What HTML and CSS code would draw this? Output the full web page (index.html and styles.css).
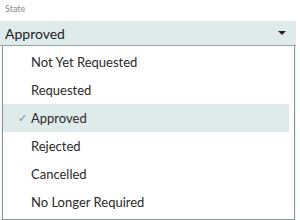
FILE: index.html
```html
<!DOCTYPE html>
<html lang="en">
<head>
    <meta charset="UTF-8">
    <title>State</title>
    <link rel="stylesheet" href="styles.css">
</head>
<body>
    <div class="field">
        <div class="field-label">State</div>
        <div class="select">
            <span class="select-value">Approved</span>
            <span class="caret"></span>
        </div>
        <ul class="menu">
            <li class="option">Not Yet Requested</li>
            <li class="option">Requested</li>
            <li class="option selected"><span class="tick">&#10003;</span>Approved</li>
            <li class="option">Rejected</li>
            <li class="option">Cancelled</li>
            <li class="option">No Longer Required</li>
        </ul>
    </div>
</body>
</html>
```

FILE: styles.css
```css
body {
    margin: 0;
    font-family: Lato, "Open Sans", sans-serif;
    background: #fff;
    color: #222;
}
.field {
    width: 296px;
    padding-top: 3px;
}
.field-label {
    font-size: 9px;
    color: #8a8a8a;
    padding-left: 5px;
    height: 18px;
    line-height: 12px;
}
.select {
    display: flex;
    align-items: center;
    justify-content: space-between;
    height: 24px;
    padding: 0 10px 0 5px;
    background-color: #dfeaea;
    border-bottom: 1px solid #8fa8a2;
}
.select-value {
    font-size: 14px;
    color: #1e1e1e;
}
.caret {
    width: 0;
    height: 0;
    border-left: 4px solid transparent;
    border-right: 4px solid transparent;
    border-top: 4px solid #222;
}
.menu {
    list-style: none;
    margin: 0 1px 0 2px;
    padding: 2px 5px 3px 0;
    background: #fff;
    border: 1px solid #7f9a94;
    border-top: none;
    box-shadow: 0 1px 2px rgba(0, 0, 0, 0.15);
}
.option {
    position: relative;
    height: 28px;
    line-height: 28px;
    padding-left: 28px;
    font-size: 13px;
    color: #2a2a2a;
}
.selected {
    background-color: #dfeaea;
}
.tick {
    position: absolute;
    left: 15px;
    font-size: 11px;
    color: #7d8f8c;
}
```
